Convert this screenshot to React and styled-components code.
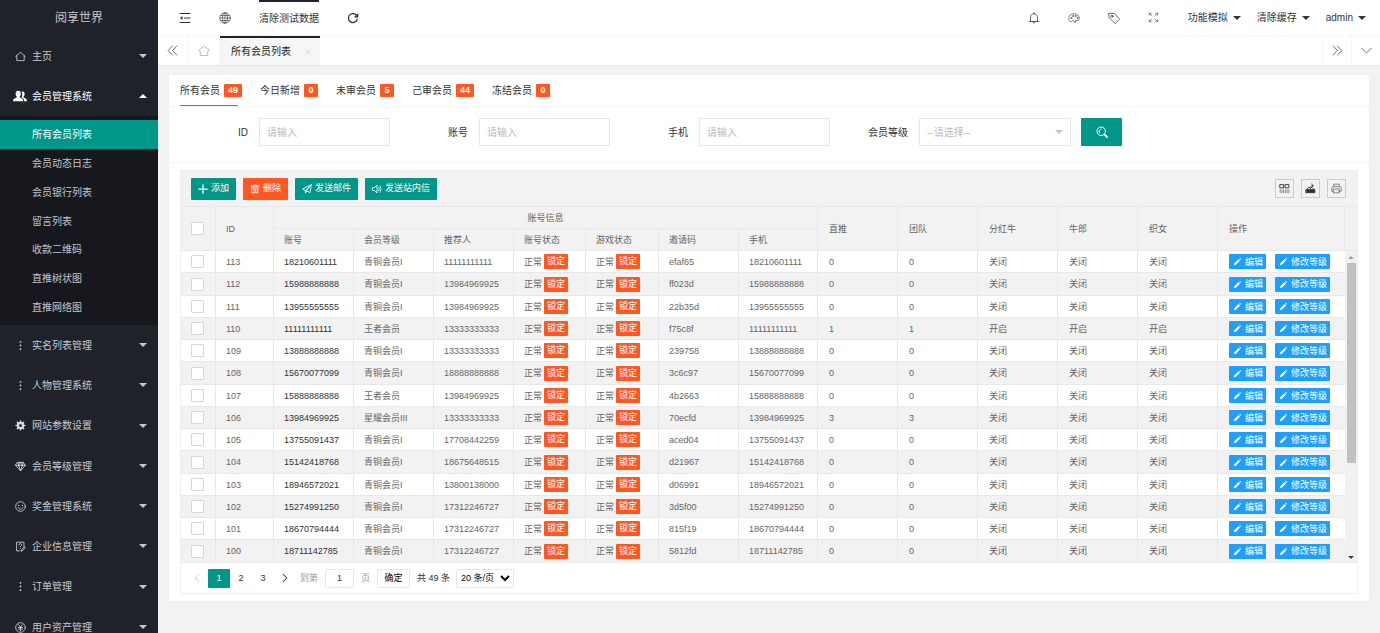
import React from "react";
import styled, { createGlobalStyle, css } from "styled-components";

const GlobalStyle = createGlobalStyle`
  * { box-sizing: border-box; }
  body {
    margin: 0;
    background: #f2f2f2;
    color: #333;
    font: 10px/15px "Liberation Sans", "Noto Sans CJK SC", sans-serif;
  }
  button, input, select { font: inherit; color: inherit; margin: 0; }
  button { border: 0; padding: 0; background: none; cursor: pointer; }
  a { color: inherit; text-decoration: none; }
  ul { list-style: none; margin: 0; padding: 0; }
`;

/* ---------- icons ---------- */

const Svg = styled.svg`
  display: block;
  flex: none;
  width: ${(p) => p.$size}px;
  height: ${(p) => p.$size}px;
  fill: none;
  stroke: currentColor;
  stroke-width: ${(p) => p.$weight};
  stroke-linecap: round;
  stroke-linejoin: round;
`;

const shapes = {
  home: <path d="M4 11v10h16V11M1.5 12 12 3l10.5 9" />,
  house: <path d="M12 2.5 2 10.5l2.5 2V21h15v-8.500l2.500-2z" />,
  users: (
    <g fill="currentColor" stroke="none">
      <path d="M9 3c3 0 4.500 2.200 4.500 5 0 2-.8 3.800-2 4.800 0 1.500.5 2 2 2.600 2.500 1 4 2 4 5.600H0c0-3.600 1.500-4.600 4.500-5.600 1.500-.6 2-1.100 2-2.600-1.200-1-2-2.800-2-4.800 0-2.800 1.500-5 4.500-5z" />
      <path d="M15 4c3 0 5 1.800 5 4.600 0 1.800-.8 3.400-2 4.400 0 1.300.6 1.900 2 2.400 2.600 1 4 2 4 5.600h-5c0-4-1.500-5.500-4.500-6.600 1.500-2.400 2-6.400.5-10.400z" />
    </g>
  ),
  dots: (
    <g fill="currentColor" stroke="none">
      <circle cx="12" cy="4" r="2" />
      <circle cx="12" cy="12" r="2" />
      <circle cx="12" cy="20" r="2" />
    </g>
  ),
  gear: (
    <>
      <circle cx="12" cy="12" r="5.500" strokeWidth="5" />
      <path strokeWidth="3.500" d="M12 2.500v3M12 18.500v3M2.500 12h3M18.500 12h3M5.300 5.300l2 2M16.700 16.700l2 2M18.700 5.300l-2 2M7.300 16.700l-2 2" />
    </>
  ),
  gem: <path d="M6 3h12l4.500 6.500L12 21.500 1.500 9.500zM1.500 9.500h21M8 9.500l4 12 4-12M6 3l2 6.500L12 3l4 6.500L18 3" />,
  smile: (
    <>
      <circle cx="12" cy="12" r="10.500" />
      <path d="M7 14.500c1 2 3 3 5 3s4-1 5-3" />
      <path strokeWidth="3" d="M8 9.500v.1M16 9.500v.1" />
    </>
  ),
  doc: (
    <>
      <path d="M11 21.500H3.500v-19h16V12" />
      <path d="M8.500 8.500c0-4 6-3.500 6 0 0 2-3 2-3 4.500M11.500 16v.1M14 21.500l1-3.500 6-5.500 1.500 1.500-5 6z" />
    </>
  ),
  yen: (
    <>
      <circle cx="12" cy="12" r="10.500" />
      <path d="m8 6 4 5.500L16 6M7.500 12h9M7.500 15.500h9M12 11.500V19" />
    </>
  ),
  shrink: (
    <>
      <path d="M2 3h20M11 12h11M2 21h20" />
      <path fill="currentColor" stroke="none" d="M7 8v8l-5-4z" />
    </>
  ),
  globe: (
    <>
      <circle cx="12" cy="12" r="10.500" />
      <ellipse cx="12" cy="12" rx="5" ry="10.500" />
      <path d="M2 12h20M3.500 7h17M3.500 17h17M12 2v20" />
    </>
  ),
  refresh: (
    <>
      <path d="M20.500 14.500A9 9 0 1 1 18 5.500" />
      <path fill="currentColor" stroke="none" d="M22.500 2v9h-9z" />
    </>
  ),
  bell: <path d="M2.500 19h19M5 19v-8.500C5 6 8 3.500 12 3.500s7 2.500 7 7V19M9.500 19.500c0 3.500 5 3.500 5 0M12 1.500v2" />,
  palette: (
    <>
      <path d="M14.500 20.500c-1-1.500-.5-3.500 1.500-3.500 3 0 6.500.5 6.500-4.500C22.500 7 18 3.500 12 3.500S1.500 7.500 1.500 13c0 3 1.500 6 4 6.500 2 .4 2-2.500 4-2.500 2.500 0 2 3.500 5 3.500z" />
      <circle cx="6.500" cy="12" r="1" />
      <circle cx="10" cy="8" r="1" />
      <circle cx="15" cy="8" r="1" />
      <circle cx="18.500" cy="12" r="1" />
    </>
  ),
  tag: (
    <>
      <path d="M2 2.500 12.500 3 22.500 13.500c.6.6.6 1 0 1.600l-7.400 7.400c-.6.6-1 .6-1.600 0L3 12z" />
      <circle cx="8" cy="8.500" r="2.200" />
    </>
  ),
  full: <path d="M3 7V3h4M3 3l5.500 5.500M17 3h4v4M21 3l-5.500 5.500M3 17v4h4M3 21l5.500-5.500M21 17v4h-4M21 21l-5.500-5.500" />,
  left2: <path d="m12 2-9.500 10L12 22M21.500 2 12 12l9.500 10" />,
  right2: <path d="m12 2 9.500 10L12 22M2.500 2 12 12 2.500 22" />,
  down: <path d="m1.500 7 10.500 10.500L22.500 7" />,
  left: <path d="M16.500 3 7.500 12l9 9" />,
  right: <path d="m7.500 3 9 9-9 9" />,
  close: <path d="m5 5 14 14M19 5 5 19" />,
  search: (
    <>
      <circle cx="10.500" cy="10.500" r="8.500" />
      <path d="M7 13.500c-2-3 0-6.500 3-7" />
      <path strokeWidth="4" d="m18 18 4 4" />
    </>
  ),
  plus: <path d="M12 2v20M2 12h20" />,
  trash: <path d="M2 5.500h20M8 5V2.500h8V5M5 9.500h14V21H5zM10 12.500V18M14 12.500V18" />,
  send: <path d="M22.500 1.500 1.500 12l6.500 3.500zM22.500 1.500 19 20.500l-8-4zM8 15.500v6.500l3.500-5" />,
  volume: <path d="M2 8.500h4l6-6v19l-6-6H2zM16 8c2 2 2 6 0 8M19 4.500l3 7.500-3 7.500" />,
  columns: (
    <>
      <path strokeWidth="2" d="M2.500 3.500h7.500v7H2.500zM14 3.500h7.500v7H14z" />
      <path opacity="0.6" strokeWidth="2" strokeLinecap="butt" d="M2.500 14v8M6.200 14v8M10 14v8M14 14v8M17.700 14v8M21.500 14v8" />
    </>
  ),
  exporter: (
    <>
      <path fill="currentColor" d="M2.500 14.500h19v6.500h-19z" />
      <path d="M5 13l2-3h4M12 12c0-4 1.500-6 5-6M14.500 2.500 18.500 6l-4 3.500M17 11l2 2" />
    </>
  ),
  printer: <path d="M6 8V2.500h12V8M6 18H2C.8 12 2 8 5 8h14c3 0 4.200 4 3 10h-4M6 13h12v8.500H6z" />,
  pencil: (
    <g fill="currentColor" stroke="none">
      <path d="M2 22l1.500-5.500L15 5l4 4L7.500 20.500zM16.500 3.500l2-1.500L22 5.500l-1.500 2z" />
    </g>
  ),
};

const Icon = ({ name, size = 11, weight = 2 }) => (
  <Svg viewBox="0 0 24 24" $size={size} $weight={weight} aria-hidden="true">
    {shapes[name]}
  </Svg>
);

const Caret = styled.i`
  width: 0;
  height: 0;
  flex: none;
  border: 4px solid transparent;
  ${(p) =>
    p.$up
      ? css`border-bottom-color: currentColor; border-top-width: 0;`
      : css`border-top-color: currentColor; border-bottom-width: 0;`}
`;

/* ---------- sidebar ---------- */

const Shell = styled.div`
  display: flex;
  min-height: 100vh;
`;

const Sidebar = styled.aside`
  position: sticky;
  top: 0;
  width: 158px;
  height: 100vh;
  flex: none;
  overflow: hidden;
  background: #20222a;
  color: rgba(255, 255, 255, 0.75);
`;

const Logo = styled.h1`
  margin: 0;
  height: 36px;
  font-size: 12px;
  font-weight: 400;
  line-height: 36px;
  text-align: center;
`;

const MenuGroup = styled.li`
  &:nth-child(4n + 5) > a { height: 41px; }
`;

const MenuLink = styled.a`
  display: flex;
  align-items: center;
  gap: 5px;
  height: 40px;
  padding: 0 11px 0 13px;
  color: ${(p) => (p.$open ? "#fff" : "inherit")};
`;

const MenuIcon = styled.span`
  display: grid;
  place-items: center;
  width: 14px;
`;

const MenuText = styled.span`
  flex: 1;
`;

const SubMenu = styled.ul`
  padding: 4px 0 3px;
  background: #16181d;
`;

const SubItem = styled.li`
  height: 29px;
  line-height: 29px;
  &:nth-child(4n) { height: 28px; }
`;

const SubLink = styled.a`
  display: block;
  padding-left: 32px;
  ${(p) => p.$active && css`background: #009688; color: #fff;`}
`;

/* ---------- top bars ---------- */

const Main = styled.div`
  flex: 1;
  min-width: 0;
`;

const TopBar = styled.header`
  display: flex;
  justify-content: space-between;
  height: 36px;
  padding: 0 14px 0 21px;
  background: #fff;
  border-bottom: 1px solid #f6f6f6;
`;

const TopGroup = styled.div`
  display: flex;
  align-items: center;
  gap: 28px;
`;

const DropGroup = styled.div`
  display: flex;
  gap: 16px;
`;

const IconButton = styled.button`
  display: grid;
  place-items: center;
  width: 12px;
  height: 36px;
`;

const TopAction = styled.a`
  height: 36px;
  border-top: 2px solid #20222a;
  line-height: 33px;
`;

const DropButton = styled.button`
  display: flex;
  align-items: center;
  gap: 5px;
  height: 36px;
`;

const TabBar = styled.nav`
  display: flex;
  height: 30px;
  background: #fff;
  border-bottom: 1px solid #e6e6e6;
  color: #666;
`;

const TabButton = styled.button`
  display: grid;
  place-items: center;
  width: ${(p) => p.$width}px;
  border-${(p) => (p.$side === "left" ? "right" : "left")}: 1px solid #f6f6f6;
  color: ${(p) => (p.$faint ? "#aaa" : "inherit")};
`;

const PageTab = styled.div`
  display: flex;
  align-items: center;
  gap: 13px;
  height: 29px;
  padding: 0 8px 0 11px;
  border-top: 2px solid #20222a;
  background: #f6f6f6;
  color: #222;
  button { color: #ccc; }
`;

const Spacer = styled.div`
  flex: 1;
`;

/* ---------- card, tabs and filter ---------- */

const Card = styled.section`
  margin: 9px 11px 31px;
  padding-bottom: 7px;
  border-radius: 2px;
  background: #fff;
`;

const CardTabs = styled.ul`
  display: flex;
  gap: 18px;
  height: 32px;
  padding: 0 11px;
  border-bottom: 1px solid #f6f6f6;
`;

const CardTab = styled.li`
  position: relative;
  a {
    display: flex;
    align-items: center;
    gap: 4px;
    height: 30px;
  }
  ${(p) => p.$active && css`
    &::after {
      content: "";
      position: absolute;
      left: 0;
      right: 4px;
      bottom: 0;
      height: 1px;
      background: #2fa05f;
    }
  `}
`;

const Badge = styled.span`
  min-width: 14px;
  height: 13px;
  padding: 0 4px;
  border-radius: 1px;
  background: #ff5722;
  color: #fff;
  font-size: 9px;
  font-weight: 700;
  line-height: 13px;
  text-align: center;
`;

const FilterForm = styled.form`
  display: flex;
  align-items: flex-start;
  gap: 10px;
  height: 56px;
  padding: 11px;
  border-bottom: 1px solid #f6f6f6;
`;

const Field = styled.div`
  display: flex;
  align-items: center;
  label {
    width: 79px;
    padding-right: 11px;
    text-align: right;
  }
`;

const control = css`
  border: 1px solid #e8e8e8;
  border-radius: 1px;
  background: #fff;
`;

const TextInput = styled.input`
  ${control}
  width: 131px;
  height: 28px;
  padding: 0 7px;
  &::placeholder { color: #bbb; opacity: 1; }
`;

const SelectBox = styled.div`
  ${control}
  display: flex;
  align-items: center;
  width: 152px;
  height: 28px;
  padding: 0 7px;
  color: #c2c2c2;
  select {
    flex: 1;
    appearance: none;
    border: 0;
    padding: 0;
    background: none;
    color: #bbb;
  }
`;

const SearchButton = styled.button`
  display: grid;
  place-items: center;
  width: 41px;
  height: 28px;
  border-radius: 1px;
  background: #009688;
  color: #fff;
`;

/* ---------- data table ---------- */

const TableView = styled.div`
  margin: 7px 11px 0;
  border: 1px solid #eee;
  font-size: 9px;
  color: #666;
`;

const ToolBar = styled.div`
  display: flex;
  align-items: center;
  justify-content: space-between;
  height: 36px;
  padding: 0 11px 0 10px;
  border-bottom: 1px solid #e8e8e8;
  background: #f2f2f2;
`;

const ToolGroup = styled.div`
  display: flex;
  gap: 7px;
`;

const ActionButton = styled.button`
  display: flex;
  align-items: center;
  gap: 3px;
  height: 22px;
  padding: 0 7px;
  border-radius: 1px;
  background: ${(p) => (p.$danger ? "#ff5722" : "#009688")};
  color: #fff;
`;

const SquareButton = styled.button`
  display: grid;
  place-items: center;
  width: 19px;
  height: 19px;
  border: 1px solid #ccc;
  color: ${(p) => (p.$soft ? "#777" : "#333")};
`;

const TableArea = styled.div`
  display: flex;
`;

const Table = styled.table`
  flex: 1;
  min-width: 0;
  table-layout: fixed;
  border-collapse: separate;
  border-spacing: 0;
  line-height: 14px;

  th, td {
    height: 22px;
    padding: 0 10px;
    border-right: 1px solid #e8e8e8;
    border-bottom: 1px solid #e8e8e8;
    font-weight: 400;
    text-align: left;
    white-space: nowrap;
    overflow: hidden;
  }
  th { background: #f2f2f2; }
  tbody tr:nth-child(4n + 2) td { height: 23px; }
  tbody tr:nth-child(even) td { background: #f2f2f2; }
  tbody td:nth-child(3) { color: #333; }
  tbody td:last-child { border-right-color: transparent; }
  thead tr:first-child th:nth-child(n + 4),
  tbody td:nth-child(n + 10) { padding-left: 11px; }
`;

const GroupHead = styled.th`
  && { text-align: center; }
`;

const Check = styled.input`
  display: block;
  appearance: none;
  width: 13px;
  height: 13px;
  margin: 0;
  border: 1px solid #d8d8d8;
  border-radius: 1px;
  background: #fff;
`;

const Status = styled.div`
  display: flex;
  align-items: center;
  gap: 2px;
`;

const LockButton = styled.button`
  height: 15px;
  padding: 0 3px;
  border-radius: 1px;
  background: #ff5722;
  color: #fff;
  line-height: 15px;
`;

const RowActions = styled.div`
  display: flex;
  gap: 9px;
`;

const RowButton = styled.button`
  display: flex;
  align-items: center;
  gap: 3px;
  height: 15px;
  padding: 0 3px 0 4px;
  border-radius: 1px;
  background: #1e9fff;
  color: #fff;
`;

const ScrollColumn = styled.div`
  display: flex;
  flex-direction: column;
  width: 12px;
  flex: none;
  border-bottom: 1px solid #e8e8e8;
  background: #f1f1f1;
`;

const ScrollHead = styled.div`
  height: 44px;
  border-bottom: 1px solid #e8e8e8;
  background: #f2f2f2;
`;

const ScrollTrack = styled.div`
  display: flex;
  flex: 1;
  flex-direction: column;
  align-items: center;
  padding: 5px 0 3px;
`;

const ScrollArrow = styled.i`
  width: 0;
  height: 0;
  border: 3px solid transparent;
  ${(p) =>
    p.$up
      ? css`border-top-width: 0; border-bottom-color: #a3a3a3;`
      : css`border-bottom-width: 0; border-top-color: #404040;`}
`;

const ScrollThumb = styled.div`
  width: 9px;
  flex: 0 0 66%;
  margin: 4px 0 auto;
  background: #c1c1c1;
`;

const Pager = styled.div`
  display: flex;
  align-items: center;
  height: 30px;
  padding-left: 5px;
  color: #333;
`;

const PageButton = styled.button`
  display: grid;
  place-items: center;
  width: 22px;
  height: 19px;
  border-radius: 1px;
  ${(p) => p.$active && css`background: #009688; color: #fff;`}
  ${(p) => p.$muted && css`color: #c8c8c8;`}
`;

const JumpForm = styled.form`
  display: flex;
  align-items: center;
  gap: 7px;
  margin: 0 7px 0 4px;
  label { display: flex; align-items: center; gap: 7px; color: #999; }
  input {
    ${control}
    width: 29px;
    height: 19px;
    padding: 0;
    color: #333;
    text-align: center;
  }
  button {
    ${control}
    width: 33px;
    height: 19px;
    color: #000;
  }
`;

const PageSize = styled.select`
  ${control}
  width: 58px;
  height: 19px;
  margin-left: 6px;
  padding: 0;
  color: #000;
`;

/* ---------- data ---------- */

const menu = [
  { icon: "home", text: "主页" },
  {
    icon: "users",
    text: "会员管理系统",
    items: ["所有会员列表", "会员动态日志", "会员银行列表", "留言列表", "收款二维码", "直推树状图", "直推网络图"],
  },
  { icon: "dots", text: "实名列表管理" },
  { icon: "dots", text: "人物管理系统" },
  { icon: "gear", text: "网站参数设置" },
  { icon: "gem", text: "会员等级管理" },
  { icon: "smile", text: "奖金管理系统" },
  { icon: "doc", text: "企业信息管理" },
  { icon: "dots", text: "订单管理" },
  { icon: "yen", text: "用户资产管理" },
];

const tabs = [
  ["所有会员", 49],
  ["今日新增", 0],
  ["未审会员", 5],
  ["己审会员", 44],
  ["冻结会员", 0],
];

const bronze = "青铜会员I";
const rows = [
  [113, "18210601111", bronze, "11111111111", "efaf65"],
  [112, "15988888888", bronze, "13984969925", "ff023d"],
  [111, "13955555555", bronze, "13984969925", "22b35d"],
  [110, "11111111111", "王者会员", "13333333333", "f75c8f", 1, "开启"],
  [109, "13888888888", bronze, "13333333333", "239758"],
  [108, "15670077099", bronze, "18888888888", "3c6c97"],
  [107, "15888888888", "王者会员", "13984969925", "4b2663"],
  [106, "13984969925", "星耀会员III", "13333333333", "70ecfd", 3],
  [105, "13755091437", bronze, "17708442259", "aced04"],
  [104, "15142418768", bronze, "18675648515", "d21967"],
  [103, "18946572021", bronze, "13800138000", "d06991"],
  [102, "15274991250", bronze, "17312246727", "3d5f00"],
  [101, "18670794444", bronze, "17312246727", "815f19"],
  [100, "18711142785", bronze, "17312246727", "5812fd"],
];

const columnWidths = [35, 58, 80, 80, 80, 72, 73, 80, 79, 80, 80, 80, 80, 80];

const StatusCell = () => (
  <Status>
    正常<LockButton type="button">锁定</LockButton>
  </Status>
);

const MemberRow = ({ row: [id, account, level, referrer, code, count = 0, state = "关闭"] }) => (
  <tr>
    <td><Check type="checkbox" aria-label={`ID ${id}`} /></td>
    <td>{id}</td>
    <td>{account}</td>
    <td>{level}</td>
    <td>{referrer}</td>
    <td><StatusCell /></td>
    <td><StatusCell /></td>
    <td>{code}</td>
    <td>{account}</td>
    <td>{count}</td>
    <td>{count}</td>
    <td>{state}</td>
    <td>{state}</td>
    <td>{state}</td>
    <td>
      <RowActions>
        <RowButton type="button"><Icon name="pencil" size={9} />编辑</RowButton>
        <RowButton type="button"><Icon name="pencil" size={9} />修改等级</RowButton>
      </RowActions>
    </td>
  </tr>
);

export default function App() {
  return (
    <Shell>
      <GlobalStyle />
      <Sidebar>
        <Logo>阅享世界</Logo>
        <ul>
          {menu.map((m) => (
            <MenuGroup key={m.text}>
              <MenuLink href="#" $open={!!m.items}>
                <MenuIcon><Icon name={m.icon} size={m.items ? 14 : 11} /></MenuIcon>
                <MenuText>{m.text}</MenuText>
                <Caret $up={!!m.items} />
              </MenuLink>
              {m.items && (
                <SubMenu>
                  {m.items.map((t, i) => (
                    <SubItem key={t}>
                      <SubLink href="#" $active={i === 0}>{t}</SubLink>
                    </SubItem>
                  ))}
                </SubMenu>
              )}
            </MenuGroup>
          ))}
        </ul>
      </Sidebar>

      <Main>
        <TopBar>
          <TopGroup>
            <IconButton aria-label="菜单"><Icon name="shrink" size={12} /></IconButton>
            <IconButton aria-label="网站"><Icon name="globe" size={12} weight={1.2} /></IconButton>
            <TopAction href="#">清除测试数据</TopAction>
            <IconButton aria-label="刷新"><Icon name="refresh" size={12} weight={2.5} /></IconButton>
          </TopGroup>
          <TopGroup>
            <IconButton aria-label="消息"><Icon name="bell" size={12} weight={1.5} /></IconButton>
            <IconButton aria-label="主题"><Icon name="palette" size={12} weight={1.3} /></IconButton>
            <IconButton aria-label="便签"><Icon name="tag" size={12} weight={1.5} /></IconButton>
            <IconButton aria-label="全屏"><Icon name="full" size={11} weight={1.2} /></IconButton>
            <DropGroup>
              <DropButton>功能模拟<Caret /></DropButton>
              <DropButton>清除缓存<Caret /></DropButton>
              <DropButton>admin<Caret /></DropButton>
            </DropGroup>
          </TopGroup>
        </TopBar>
        <TabBar>
          <TabButton $width={30} $side="left" aria-label="向左"><Icon name="left2" size={11} /></TabButton>
          <TabButton $width={32} $side="left" $faint aria-label="首页"><Icon name="house" size={12} weight={1.6} /></TabButton>
          <PageTab>
            所有会员列表
            <button aria-label="关闭"><Icon name="close" size={8} /></button>
          </PageTab>
          <Spacer />
          <TabButton $width={29} $side="right" aria-label="向右"><Icon name="right2" size={11} /></TabButton>
          <TabButton $width={29} $side="right" aria-label="更多"><Icon name="down" size={11} /></TabButton>
        </TabBar>

        <Card>
          <CardTabs>
            {tabs.map(([text, count], i) => (
              <CardTab key={text} $active={i === 0}>
                <a href="#">{text}<Badge>{count}</Badge></a>
              </CardTab>
            ))}
          </CardTabs>
          <FilterForm>
            <Field><label htmlFor="f-id">ID</label><TextInput id="f-id" placeholder="请输入" /></Field>
            <Field><label htmlFor="f-account">账号</label><TextInput id="f-account" placeholder="请输入" /></Field>
            <Field><label htmlFor="f-phone">手机</label><TextInput id="f-phone" placeholder="请输入" /></Field>
            <Field>
              <label htmlFor="f-level">会员等级</label>
              <SelectBox>
                <select id="f-level"><option>--请选择--</option></select>
                <Caret />
              </SelectBox>
            </Field>
            <SearchButton type="button" aria-label="搜索"><Icon name="search" size={12} /></SearchButton>
          </FilterForm>

          <TableView>
            <ToolBar>
              <ToolGroup>
                <ActionButton><Icon name="plus" size={10} weight={3} />添加</ActionButton>
                <ActionButton $danger><Icon name="trash" size={10} />删除</ActionButton>
                <ActionButton><Icon name="send" size={10} />发送邮件</ActionButton>
                <ActionButton><Icon name="volume" size={10} />发送站内信</ActionButton>
              </ToolGroup>
              <ToolGroup>
                <SquareButton aria-label="筛选列"><Icon name="columns" size={11} /></SquareButton>
                <SquareButton aria-label="导出"><Icon name="exporter" size={11} /></SquareButton>
                <SquareButton $soft aria-label="打印"><Icon name="printer" size={11} /></SquareButton>
              </ToolGroup>
            </ToolBar>
            <TableArea>
              <Table>
                <colgroup>
                  {columnWidths.map((w, i) => <col key={i} width={w} />)}
                  <col />
                </colgroup>
                <thead>
                  <tr>
                    <th rowSpan={2}><Check type="checkbox" aria-label="全选" /></th>
                    <th rowSpan={2}>ID</th>
                    <GroupHead colSpan={7}>账号信息</GroupHead>
                    <th rowSpan={2}>直推</th>
                    <th rowSpan={2}>团队</th>
                    <th rowSpan={2}>分红牛</th>
                    <th rowSpan={2}>牛郎</th>
                    <th rowSpan={2}>织女</th>
                    <th rowSpan={2}>操作</th>
                  </tr>
                  <tr>
                    <th>账号</th>
                    <th>会员等级</th>
                    <th>推荐人</th>
                    <th>账号状态</th>
                    <th>游戏状态</th>
                    <th>邀请码</th>
                    <th>手机</th>
                  </tr>
                </thead>
                <tbody>
                  {rows.map((row) => <MemberRow key={row[0]} row={row} />)}
                </tbody>
              </Table>
              <ScrollColumn>
                <ScrollHead />
                <ScrollTrack>
                  <ScrollArrow $up />
                  <ScrollThumb />
                  <ScrollArrow />
                </ScrollTrack>
              </ScrollColumn>
            </TableArea>
            <Pager>
              <PageButton $muted aria-label="上一页"><Icon name="left" size={10} /></PageButton>
              <PageButton $active>1</PageButton>
              <PageButton>2</PageButton>
              <PageButton>3</PageButton>
              <PageButton aria-label="下一页"><Icon name="right" size={10} weight={2.5} /></PageButton>
              <JumpForm>
                <label>到第<input defaultValue="1" />页</label>
                <button type="button">确定</button>
              </JumpForm>
              共 49 条
              <PageSize aria-label="每页条数"><option>20 条/页</option></PageSize>
            </Pager>
          </TableView>
        </Card>
      </Main>
    </Shell>
  );
}
